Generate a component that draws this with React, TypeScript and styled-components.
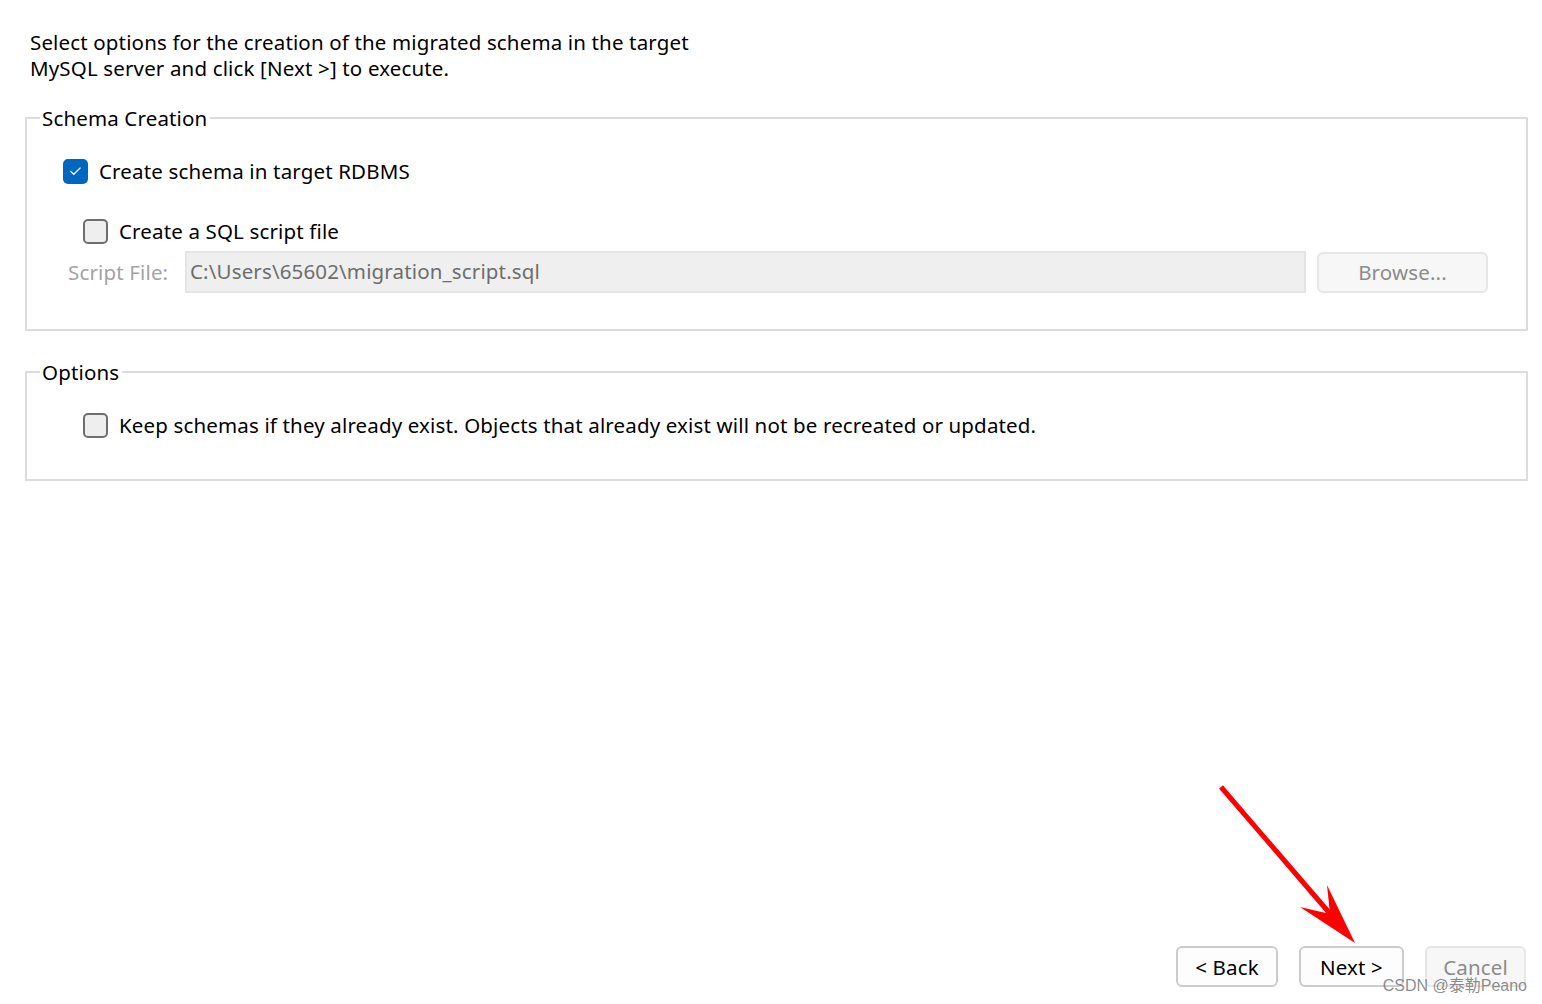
import React from "react";
import styled, { createGlobalStyle } from "styled-components";

const Global = createGlobalStyle`
  html, body { margin: 0; padding: 0; background: #ffffff; }
  body { font-family: "Noto Sans", "Open Sans", sans-serif; color: #000; }
  * { box-sizing: border-box; }
`;

const Page = styled.div`
  position: relative;
  min-height: 1004px;
  display: flex;
  flex-direction: column;
  padding: 29px 14px 17px 25px;
  font-size: 20.5px;
  letter-spacing: 0.15px;
  line-height: 26px;
`;

const Intro = styled.p`
  margin: 0 0 0 5px;
  width: 720px;
`;

const Group = styled.fieldset<{ $top: number; $bottom: number }>`
  margin: ${(p) => p.$top}px 0 0 0;
  padding: 0 38px ${(p) => p.$bottom}px 0;
  border: 2px solid #dcdcdc;
  min-width: 0;
`;

const Legend = styled.legend`
  margin-left: 13px;
  padding: 0 3px 0 2px;
  line-height: 26px;
`;

const CheckRow = styled.label<{ $indent: number; $top: number }>`
  display: flex;
  align-items: center;
  gap: 11px;
  margin-top: ${(p) => p.$top}px;
  padding-left: ${(p) => p.$indent}px;
  height: 26px;
`;

const Box = styled.span<{ $checked?: boolean }>`
  width: 25px;
  height: 25px;
  border-radius: 5px;
  flex: none;
  display: flex;
  align-items: center;
  justify-content: center;
  background: ${(p) => (p.$checked ? "#0067c0" : "#eeeeee")};
  border: ${(p) => (p.$checked ? "none" : "2px solid #6e6e6e")};
`;

const FileRow = styled.div`
  display: flex;
  align-items: center;
  margin-top: 7px;
  padding-left: 41px;
  height: 42px;
`;

const FileLabel = styled.span`
  width: 117px;
  color: #a3a3a3;
  flex: none;
`;

const FileInput = styled.div`
  flex: 1;
  height: 42px;
  background: #efefef;
  border: 2px solid #e4e4e4;
  color: #6d6d6d;
  padding: 5px 0 0 3px;
  line-height: 26px;
`;

const Button = styled.div<{ $disabled?: boolean; $w: number }>`
  width: ${(p) => p.$w}px;
  height: 41px;
  border: 2px solid ${(p) => (p.$disabled ? "#e6e6e6" : "#cccccc")};
  border-radius: 6px;
  background: ${(p) => (p.$disabled ? "#f7f7f7" : "#fdfdfd")};
  color: ${(p) => (p.$disabled ? "#8c8c8c" : "#000")};
  display: flex;
  align-items: center;
  justify-content: center;
  flex: none;
`;

const BrowseButton = styled(Button)`
  margin-left: 11px;
`;

const Spacer = styled.div`
  flex: 1;
`;

const Footer = styled.div`
  display: flex;
  justify-content: flex-end;
  gap: 21px;
  padding-right: 2px;
`;

const Arrow = styled.svg`
  position: absolute;
  left: 0;
  top: 0;
  pointer-events: none;
`;

const Watermark = styled.div`
  position: absolute;
  right: 15px;
  bottom: 9px;
  font-family: "Liberation Sans", "Noto Sans CJK SC", sans-serif;
  font-size: 16px;
  letter-spacing: 0;
  line-height: 18px;
  color: rgba(120, 120, 120, 0.85);
`;

function Check() {
  return (
    <svg width="13" height="10" viewBox="0 0 13 10">
      <path d="M1.5 5.2 L4.8 8.3 L11.5 1.6" fill="none" stroke="#ffffff" strokeWidth="1.3" />
    </svg>
  );
}

export default function App() {
  return (
    <>
      <Global />
      <Page>
        <Intro>
          Select options for the creation of the migrated schema in the target
          <br />
          MySQL server and click [Next &gt;] to execute.
        </Intro>

        <Group $top={24} $bottom={36}>
          <Legend>Schema Creation</Legend>
          <CheckRow $indent={36} $top={27}>
            <Box $checked>
              <Check />
            </Box>
            Create schema in target RDBMS
          </CheckRow>
          <CheckRow $indent={56} $top={34}>
            <Box />
            Create a SQL script file
          </CheckRow>
          <FileRow>
            <FileLabel>Script File:</FileLabel>
            <FileInput>C:\Users\65602\migration_script.sql</FileInput>
            <BrowseButton $disabled $w={171}>Browse...</BrowseButton>
          </FileRow>
        </Group>

        <Group $top={28} $bottom={41}>
          <Legend>Options</Legend>
          <CheckRow $indent={56} $top={27}>
            <Box />
            Keep schemas if they already exist. Objects that already exist will not be recreated or updated.
          </CheckRow>
        </Group>

        <Spacer />
        <Footer>
          <Button $w={102}>&lt; Back</Button>
          <Button $w={105}>Next &gt;</Button>
          <Button $disabled $w={101}>Cancel</Button>
        </Footer>

        <Arrow width="1542" height="1004" viewBox="0 0 1542 1004">
          <line x1="1221" y1="787" x2="1332" y2="916" stroke="#ff0000" strokeWidth="5" />
          <polygon points="1355,943 1300,907 1330,914 1327,885" fill="#ff0000" />
        </Arrow>
        <Watermark>CSDN @泰勒Peano</Watermark>
      </Page>
    </>
  );
}
